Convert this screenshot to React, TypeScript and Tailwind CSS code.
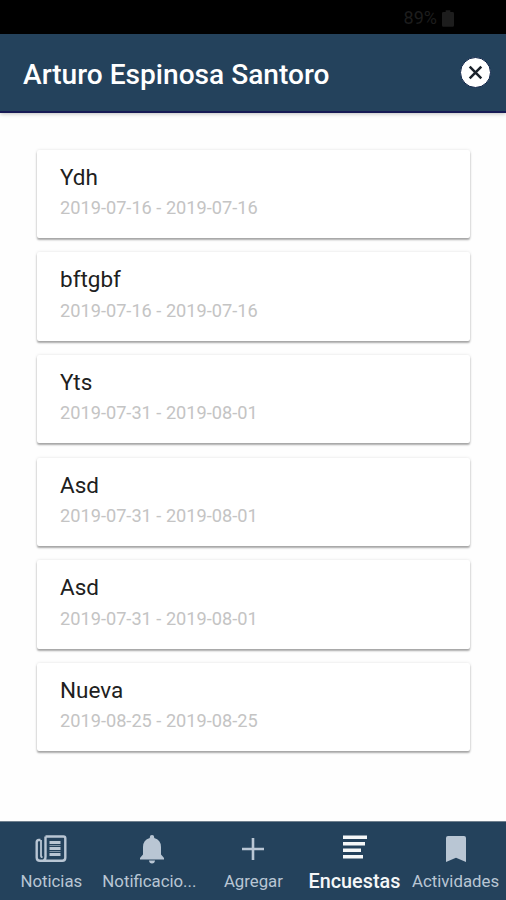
import React from 'react';

interface Encuesta {
  titulo: string;
  inicio: string;
  fin: string;
}

interface TabProps {
  label: string;
  active?: boolean;
  truncated?: boolean;
  children: React.ReactNode;
}

const encuestas: Encuesta[] = [
  { titulo: 'Ydh', inicio: '2019-07-16', fin: '2019-07-16' },
  { titulo: 'bftgbf', inicio: '2019-07-16', fin: '2019-07-16' },
  { titulo: 'Yts', inicio: '2019-07-31', fin: '2019-08-01' },
  { titulo: 'Asd', inicio: '2019-07-31', fin: '2019-08-01' },
  { titulo: 'Asd', inicio: '2019-07-31', fin: '2019-08-01' },
  { titulo: 'Nueva', inicio: '2019-08-25', fin: '2019-08-25' },
];

function StatusBar() {
  return (
    <div className="flex h-[34px] items-center justify-end bg-black pr-[52px] pt-[2px] text-[#1d1d1d]">
      <span className="mr-[5px] text-[18px] leading-none">89%</span>
      <svg className="h-[17px] w-[12px]" viewBox="0 0 13 18" fill="currentColor">
        <path d="M4 0h5v2h2.500q1.500 0 1.500 1.500v13q0 1.500-1.500 1.500h-10Q0 18 0 16.500v-13Q0 2 1.500 2H4z" />
      </svg>
    </div>
  );
}

function Header() {
  return (
    <header className="flex h-[79px] items-center justify-between border-b-2 border-[#171a55] bg-[#24425c] pl-[23px] pr-[15px] shadow-[0_1px_4px_rgba(0,0,0,0.25)]">
      <h1 className="mt-[5px] text-[28.100px] font-medium leading-none text-white">
        Arturo Espinosa Santoro
      </h1>
      <button aria-label="Cerrar">
        <svg className="h-[31px] w-[31px]" viewBox="0 0 31 31">
          <circle cx="15.500" cy="15.500" r="15" fill="#fff" stroke="#14284c" strokeWidth="1" />
          <path d="M9.700 9.700l11.600 11.600M21.300 9.700L9.700 21.300" stroke="#1b222b" strokeWidth="2.500" />
        </svg>
      </button>
    </header>
  );
}

function EncuestaCard({ titulo, inicio, fin }: Encuesta) {
  return (
    <li className="h-[88.500px] rounded-[2px] bg-white pl-[23px] pt-[13.200px] shadow-[0_2px_2px_rgba(0,0,0,0.32),0_0_3px_rgba(0,0,0,0.12)]">
      <p className="text-[22.500px] leading-[28px] text-[#202020]">{titulo}</p>
      <p className="mt-[4.300px] text-[18.200px] leading-[26px] text-[#c4c4c4]">
        {inicio} - {fin}
      </p>
    </li>
  );
}

function Tab({ label, active, truncated, children }: TabProps) {
  return (
    <button
      className={`flex w-[101.200px] flex-col items-center whitespace-nowrap ${
        active ? 'text-[#f5f7f8]' : 'text-[#b9c6d4]'
      }`}
    >
      <span className="mt-[9px] flex h-[36px] items-center justify-center">{children}</span>
      <span
        className={
          active
            ? 'text-[19.800px] font-medium leading-[29px]'
            : `text-[16.800px] leading-[29px] ${truncated ? 'pr-[6px]' : ''}`
        }
      >
        {label}
      </span>
    </button>
  );
}

function NavBar() {
  return (
    <nav className="flex h-[79px] border-t border-[#70808e] bg-[#24425c] pl-[0.800px]">
      <Tab label="Noticias">
        <svg className="h-[28px] w-[32px]" viewBox="0 0 32 28" fill="none" stroke="currentColor">
          <path
            d="M10.500 1.500h18q1.800 0 1.800 1.800v19.500q0 3-3 3H5q-3.300 0-3.300-3.300V7q0-2 2-2h1.800M10.500 1.500v20.300q0 4-3.500 4"
            strokeWidth="2.400"
          />
          <path d="M6 5v15.500q0 1.700 1.500 1.700" strokeWidth="1.800" />
          <path d="M14.500 7.500h11M14.500 13.500h11M14.500 19.500h11" strokeWidth="3" />
          <path d="M14.500 10.500h11M14.500 16.500h11" strokeWidth="1" opacity="0.600" />
        </svg>
      </Tab>
      <Tab label="Notificacio..." truncated>
        <svg className="h-[29px] w-[24px]" viewBox="0 0 24 29" fill="currentColor">
          <path d="M12 0q2.200 0 2.200 2.200v.7Q21 4.700 21 12v7.500l3 3.500v1.500H0V23l3-3.500V12q0-7.300 6.800-9.100v-.7Q9.800 0 12 0zM9 25.500h6q-.3 3-3 3T9 25.500z" />
        </svg>
      </Tab>
      <Tab label="Agregar">
        <svg className="h-[22px] w-[22px]" viewBox="0 0 22 22" stroke="currentColor">
          <path d="M11 0v22M0 11h22" strokeWidth="2.600" />
        </svg>
      </Tab>
      <Tab label="Encuestas" active>
        <svg className="mb-[4px] ml-[2px] h-[24px] w-[24px]" viewBox="0 0 24 24" fill="currentColor">
          <path d="M0 .5h24V4H0zM0 7h22v3.500H0zM0 13.500h18V17H0zM0 20h20v3.500H0z" />
        </svg>
      </Tab>
      <Tab label="Actividades">
        <svg className="h-[26px] w-[20px]" viewBox="0 0 20 26" fill="currentColor">
          <path d="M2 0h16q2 0 2 2v24l-10-4.300L0 26V2q0-2 2-2z" />
        </svg>
      </Tab>
    </nav>
  );
}

export default function App() {
  return (
    <div className="flex h-[900px] w-[506px] flex-col overflow-hidden bg-[#fefefe] font-[Roboto,sans-serif]">
      <StatusBar />
      <Header />
      <main className="flex-1 pl-[37px] pr-[36px] pt-[36.500px]">
        <ul className="flex flex-col gap-[14.200px]">
          {encuestas.map((encuesta, i) => (
            <EncuestaCard key={i} {...encuesta} />
          ))}
        </ul>
      </main>
      <NavBar />
    </div>
  );
}
